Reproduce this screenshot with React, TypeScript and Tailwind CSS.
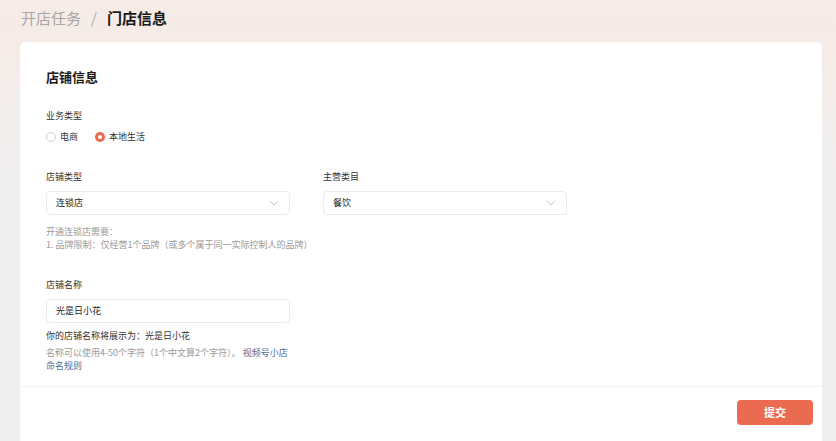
import React from 'react';

const Chevron = () => (
    <svg width="10" height="6" viewBox="0 0 10 6" fill="none" className="shrink-0">
        <path d="M1 1l4 4 4-4" stroke="#bdbdbd" strokeWidth="0.9" strokeLinecap="round" strokeLinejoin="round" />
    </svg>
);

const Radio = ({ checked, label }: { checked?: boolean; label: string }) => (
    <div className="flex items-center gap-[4px]">
        {checked ? (
            <span className="w-[10px] h-[10px] rounded-full bg-[#ea6b4f] flex items-center justify-center">
                <span className="w-[4px] h-[4px] rounded-full bg-white" />
            </span>
        ) : (
            <span className="w-[10px] h-[10px] rounded-full border border-[#cfcfcf] bg-white" />
        )}
        <span className="text-[9px] leading-[14px] text-[#333]">{label}</span>
    </div>
);

const Field = ({ label, children }: { label: string; children: React.ReactNode }) => (
    <div className="flex flex-col w-[244px]">
        <div className="text-[9px] leading-[14px] text-[#333]">{label}</div>
        <div className="mt-[7px]">{children}</div>
    </div>
);

const Select = ({ value }: { value: string }) => (
    <div className="h-[24px] rounded-[4px] border border-[#ececec] bg-white flex items-center justify-between pl-[9px] pr-[10px]">
        <span className="text-[9px] text-[#222]">{value}</span>
        <Chevron />
    </div>
);

export default function App() {
    return (
        <div
            className="h-screen w-full overflow-hidden bg-[#efefef] bg-[linear-gradient(180deg,#f6ebe5_0px,#f5ece8_60px,#f1eeed_130px,#efefef_200px)] flex flex-col"
            style={{ fontFamily: '"Noto Sans CJK SC", "Noto Sans", sans-serif' }}
        >
            {/* Breadcrumb */}
            <div className="h-[42px] pl-[21px] flex items-start pt-[7px] text-[15px] leading-[22px]">
                <span className="text-[#a6a6a6]">开店任务</span>
                <span className="text-[#ababab] mx-[10px]">/</span>
                <span className="text-[#1a1a1a] font-bold">门店信息</span>
            </div>

            {/* Card */}
            <div className="ml-[20px] mr-[14px] flex-1 bg-white rounded-t-[5px] flex flex-col">
                <div className="pl-[26px] pt-[26px]">
                    <div className="text-[13px] leading-[18px] font-semibold text-[#1a1a1a]">店铺信息</div>

                    <div className="mt-[23px] text-[9px] leading-[14px] text-[#333]">业务类型</div>
                    <div className="mt-[7px] flex items-center gap-[17px]">
                        <Radio label="电商" />
                        <Radio checked label="本地生活" />
                    </div>

                    <div className="mt-[26px] flex gap-[33px]">
                        <Field label="店铺类型">
                            <Select value="连锁店" />
                        </Field>
                        <Field label="主营类目">
                            <Select value="餐饮" />
                        </Field>
                    </div>

                    <div className="mt-[10px] text-[9px] leading-[13px] text-[#9a9a9a]">
                        <div>开通连锁店需要：</div>
                        <div>1. 品牌限制：仅经营1个品牌（或多个属于同一实际控制人的品牌）</div>
                    </div>

                    <div className="mt-[27px]">
                        <Field label="店铺名称">
                            <div className="h-[24px] rounded-[4px] border border-[#ececec] bg-white flex items-center pl-[9px]">
                                <span className="text-[9px] text-[#222]">光是日小花</span>
                            </div>
                        </Field>
                    </div>

                    <div className="mt-[6px] text-[9px] leading-[14px] text-[#333]">你的店铺名称将展示为：光是日小花</div>
                    <div className="mt-[3px] w-[244px] text-[9px] leading-[13px] text-[#9a9a9a]">
                        <div>
                            名称可以使用4-50个字符（1个中文算2个字符）。 <span className="text-[#576b95]">视频号小店</span>
                        </div>
                        <div className="text-[#576b95]">命名规则</div>
                    </div>
                </div>

                <div className="mt-[14px] border-t border-[#f0f0f0] flex justify-end pt-[13px] pr-[9px]">
                    <button className="w-[76px] h-[25px] rounded-[4px] bg-[#ea6b4f] text-white text-[11px] font-semibold">
                        提交
                    </button>
                </div>
            </div>
        </div>
    );
}
